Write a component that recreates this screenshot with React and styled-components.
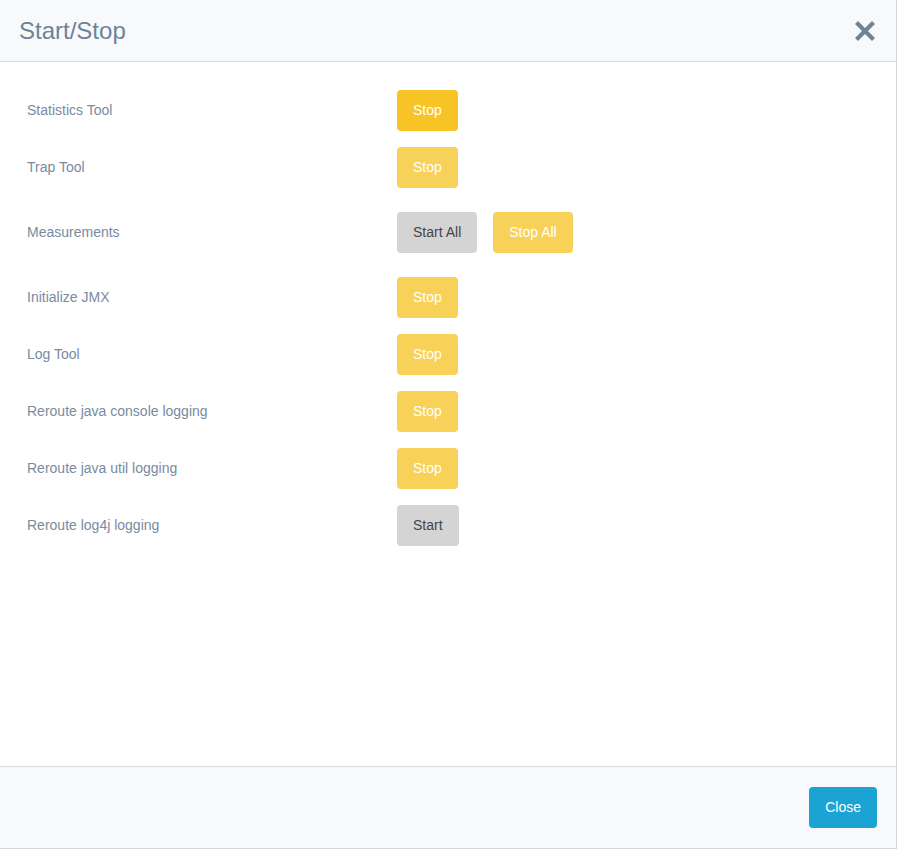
import React from 'react';
import styled, { createGlobalStyle } from 'styled-components';

const Global = createGlobalStyle`
  html, body { margin: 0; padding: 0; background: #fff; }
  body { font-family: "Liberation Sans", Arial, sans-serif; }
`;

const Modal = styled.div`
  display: flex;
  flex-direction: column;
  height: 100vh;
  box-sizing: border-box;
  border-right: 1px solid #d6d6d6;
  border-bottom: 1px solid #d6d6d6;
  background: #fff;
`;

const Header = styled.div`
  display: flex;
  align-items: center;
  justify-content: space-between;
  height: 61px;
  padding: 0 20px 0 19px;
  background: #f8f9fb;
  border-bottom: 1px solid #d9dadc;
`;

const Title = styled.h4`
  margin: 0;
  font-size: 24px;
  font-weight: normal;
  color: #6e8299;
`;

const CloseX = styled.button`
  border: 0;
  background: none;
  padding: 0;
  width: 22px;
  height: 22px;
  display: flex;
  align-items: center;
  justify-content: center;
  cursor: pointer;
`;

const Body = styled.div`
  flex: 1;
  padding: 28px 27px;
`;

const Row = styled.div`
  display: grid;
  grid-template-columns: 370px 1fr;
  align-items: center;
  margin: ${p => (p.$wide ? '24px 0' : '0 0 16px')};
`;

const Label = styled.div`
  font-size: 14px;
  color: #7a8a9f;
  padding-bottom: 2px;
`;

const Actions = styled.div`
  display: flex;
  gap: 16px;
`;

const Btn = styled.button`
  height: 41px;
  padding: 0 16px 2px;
  border: 0;
  border-radius: 4px;
  font-family: "Liberation Sans", Arial, sans-serif;
  font-size: 14px;
  cursor: pointer;
  background: ${p => (p.$kind === 'start' ? '#d4d4d4' : p.$active ? '#f7c325' : '#f8d159')};
  color: ${p => (p.$kind === 'start' ? '#444' : '#fff')};
`;

const Footer = styled.div`
  display: flex;
  justify-content: flex-end;
  align-items: center;
  height: 81px;
  padding: 0 19px;
  background: #f8f9fb;
  border-top: 1px solid #d9dadc;
`;

const Primary = styled.button`
  height: 41px;
  padding: 0 16px 2px;
  border: 0;
  border-radius: 4px;
  background: #1ba3d3;
  color: #fff;
  font-family: "Liberation Sans", Arial, sans-serif;
  font-size: 14px;
  cursor: pointer;
`;

const rows = [
  { label: 'Statistics Tool', buttons: [{ text: 'Stop', active: true }] },
  { label: 'Trap Tool', buttons: [{ text: 'Stop' }] },
  { label: 'Measurements', wide: true, buttons: [{ text: 'Start All', kind: 'start' }, { text: 'Stop All' }] },
  { label: 'Initialize JMX', buttons: [{ text: 'Stop' }] },
  { label: 'Log Tool', buttons: [{ text: 'Stop' }] },
  { label: 'Reroute java console logging', buttons: [{ text: 'Stop' }] },
  { label: 'Reroute java util logging', buttons: [{ text: 'Stop' }] },
  { label: 'Reroute log4j logging', buttons: [{ text: 'Start', kind: 'start' }] },
];

const App = () => {
  return (
    <>
      <Global />
      <Modal>
        <Header>
          <Title>Start/Stop</Title>
          <CloseX aria-label="close">
            <svg width="20" height="20" viewBox="0 0 20 20">
              <path d="M3 3 L17 17 M17 3 L3 17" stroke="#6f8296" strokeWidth="4.2" strokeLinecap="square" />
            </svg>
          </CloseX>
        </Header>
        <Body>
          {rows.map((row, i) => (
            <Row key={i} $wide={row.wide}>
              <Label>{row.label}</Label>
              <Actions>
                {row.buttons.map((b, j) => (
                  <Btn key={j} $kind={b.kind} $active={b.active}>{b.text}</Btn>
                ))}
              </Actions>
            </Row>
          ))}
        </Body>
        <Footer>
          <Primary>Close</Primary>
        </Footer>
      </Modal>
    </>
  );
};

export default App;
